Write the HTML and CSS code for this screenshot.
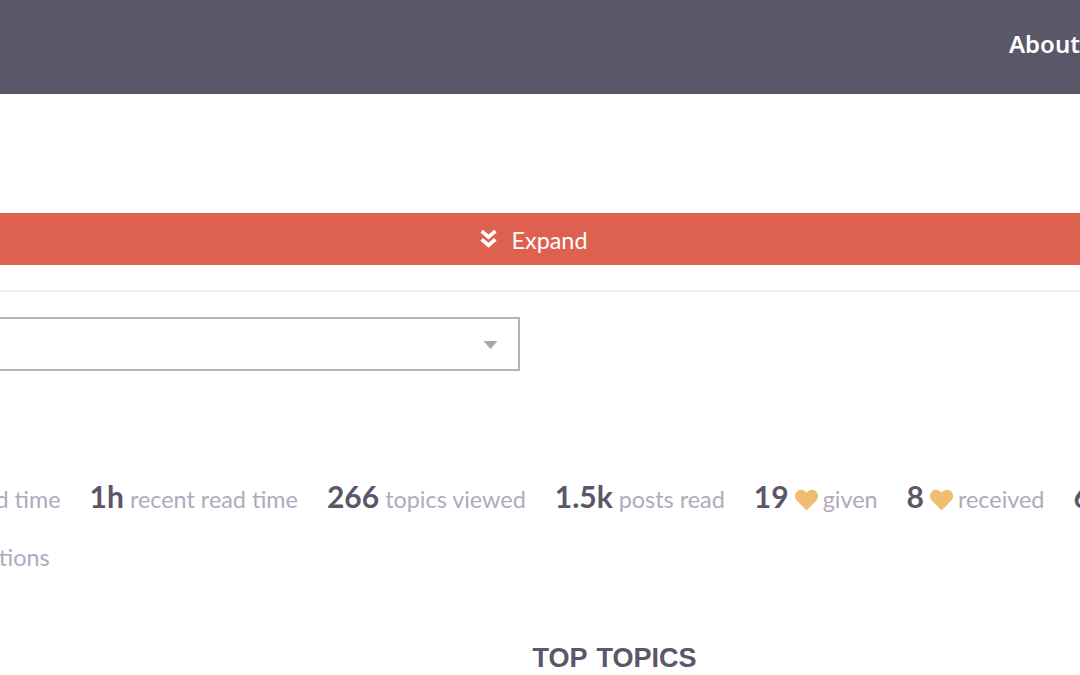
FILE: index.html
```html
<!DOCTYPE html>
<html lang="en">
<head>
    <meta charset="UTF-8">
    <meta name="viewport" content="width=device-width, initial-scale=1.0">
    <title>User Summary</title>
    <link rel="stylesheet" href="styles.css">
</head>
<body>

<header class="site-header">
    <a class="nav-link" href="#">About</a>
</header>

<button class="expand-bar" type="button">
    <svg class="expand-icon" viewBox="0 0 16 18" aria-hidden="true">
        <path d="M1.5 2 L8 7.6 L14.5 2 M1.5 9.8 L8 15.4 L14.5 9.8" fill="none" stroke="currentColor" stroke-width="3.6"/>
    </svg>
    <span>Expand</span>
</button>

<div class="divider"></div>

<div class="period-select">
    <svg class="caret" viewBox="0 0 14 8" aria-hidden="true"><path d="M0 0 H14 L7 8 Z"/></svg>
</div>

<ul class="stats-list">
    <li><b>1w</b> read time</li>
    <li><b>1h</b> recent read time</li>
    <li><b>266</b> topics viewed</li>
    <li><b>1.5k</b> posts read</li>
    <li><b>19</b> <svg class="heart" viewBox="0 0 512 512" aria-hidden="true"><path d="M462 72c-55-47-137-38-188 14l-18 19-18-19C187 34 105 25 50 72-13 126-16 222 40 280l195 201c13 13 33 13 46 0l195-201c56-58 53-154-14-208z"/></svg> given</li>
    <li><b>8</b> <svg class="heart" viewBox="0 0 512 512" aria-hidden="true"><path d="M462 72c-55-47-137-38-188 14l-18 19-18-19C187 34 105 25 50 72-13 126-16 222 40 280l195 201c13 13 33 13 46 0l195-201c56-58 53-154-14-208z"/></svg> received</li>
    <li><b>6</b> topics created</li>
    <li><b>12</b> solutions</li>
</ul>

<h3 class="section-title">TOP TOPICS</h3>

</body>
</html>
```

FILE: styles.css
```css
html, body {
    overflow: hidden;
}
body {
    font-family: Lato, Arial, sans-serif;
    background-color: white;
    margin: 0;
    padding: 0;
    height: 675px;
}
.site-header {
    background-color: #5c5669;
    height: 94px;
    display: flex;
    justify-content: flex-end;
    align-items: center;
    padding-bottom: 8px;
    box-sizing: border-box;
}
.nav-link {
    color: white;
    font-family: "Noto Sans", Arial, sans-serif;
    font-size: 24px;
    font-weight: 600;
    text-decoration: none;
}
.expand-bar {
    display: flex;
    justify-content: center;
    align-items: center;
    gap: 14px;
    width: 100%;
    height: 52px;
    margin-top: 119px;
    padding: 2px 12px 0 0;
    border: none;
    background-color: #de614f;
    color: white;
    font-family: Lato, Arial, sans-serif;
    font-size: 23.4px;
}
.expand-icon {
    width: 17px;
    height: 19px;
    margin-top: -3px;
}
.divider {
    height: 2px;
    margin-top: 25px;
    background-color: #f0f0f0;
}
.period-select {
    display: flex;
    justify-content: flex-end;
    align-items: center;
    box-sizing: border-box;
    width: 522px;
    height: 54px;
    margin: 25px 0 0 -2px;
    padding: 2px 20px 0 0;
    border: 2px solid #b3b0c2;
}
.caret {
    width: 15px;
    height: 8px;
    fill: #a9a6b4;
}
.stats-list {
    display: flex;
    flex-wrap: wrap;
    gap: 17px 29px;
    width: 1400px;
    margin: 106px 0 0 -84px;
    padding: 0;
    list-style: none;
    color: #aeabbb;
    font-size: 23.4px;
    line-height: 38px;
}
.stats-list li {
    white-space: nowrap;
}
.stats-list b {
    color: #5c5669;
    font-size: 30px;
    font-weight: 700;
}
.heart {
    width: 23px;
    height: 23px;
    margin-right: -1px;
    fill: #eebd72;
    vertical-align: -3px;
}
.section-title {
    margin: 67px 0 0 0;
    padding-left: 149px;
    text-align: center;
    word-spacing: 2px;
    color: #5c5669;
    font-family: "Liberation Sans", Arial, sans-serif;
    font-size: 27px;
    font-weight: 700;
}
```
